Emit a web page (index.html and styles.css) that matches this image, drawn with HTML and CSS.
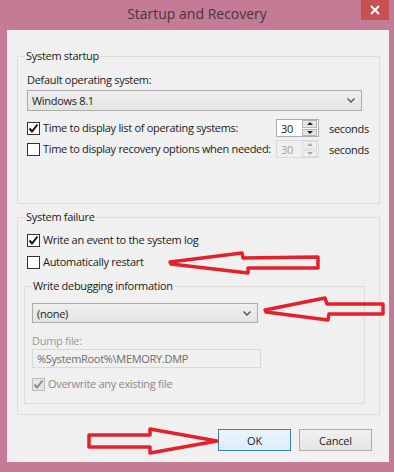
FILE: index.html
```html
<!DOCTYPE html>
<html lang="en">
<head>
    <meta charset="UTF-8">
    <title>Startup and Recovery</title>
    <link rel="stylesheet" href="styles.css">
</head>
<body>
<div class="window">
    <div class="titlebar">
        <span></span>
        <div class="title">Startup and Recovery</div>
        <div class="close">
            <svg width="10" height="10" viewBox="0 0 10 10"><path d="M1 1 L9 9 M9 1 L1 9" stroke="#fff" stroke-width="2"/></svg>
        </div>
    </div>

    <div class="client">
        <fieldset class="group startup">
            <legend>System startup</legend>
            <div class="label">Default operating system:</div>
            <div class="select os">
                <span>Windows 8.1</span>
                <svg class="chev" width="8" height="5" viewBox="0 0 8 5"><path d="M0.5 0.5 L4 4 L7.5 0.5" fill="none" stroke="#555" stroke-width="1.4"/></svg>
            </div>

            <div class="timerow first">
                <div class="check-line time-label">
                    <span class="box"><svg width="11" height="11" viewBox="0 0 11 11"><path d="M1.5 5.5 L4 8.5 L9.5 1.5" fill="none" stroke="#111" stroke-width="2"/></svg></span>
                    <span>Time to display list of operating systems:</span>
                </div>
                <div class="spin">
                    <span class="spin-val">30</span>
                    <div class="spin-btns">
                        <span class="up"></span>
                        <span class="down"></span>
                    </div>
                </div>
                <span class="unit">seconds</span>
            </div>

            <div class="timerow second">
                <div class="check-line time-label">
                    <span class="box"></span>
                    <span>Time to display recovery options when needed:</span>
                </div>
                <div class="spin disabled">
                    <span class="spin-val">30</span>
                    <div class="spin-btns">
                        <span class="up"></span>
                        <span class="down"></span>
                    </div>
                </div>
                <span class="unit">seconds</span>
            </div>
        </fieldset>

        <fieldset class="group failure">
            <legend>System failure</legend>
            <div class="check-line event">
                <span class="box"><svg width="11" height="11" viewBox="0 0 11 11"><path d="M1.5 5.5 L4 8.5 L9.5 1.5" fill="none" stroke="#111" stroke-width="2"/></svg></span>
                <span>Write an event to the system log</span>
            </div>
            <div class="check-line restart">
                <span class="box"></span>
                <span>Automatically restart</span>
            </div>

            <fieldset class="group debug">
                <legend>Write debugging information</legend>
                <div class="select dump-type">
                    <span>(none)</span>
                    <svg class="chev" width="8" height="5" viewBox="0 0 8 5"><path d="M0.5 0.5 L4 4 L7.5 0.5" fill="none" stroke="#555" stroke-width="1.4"/></svg>
                </div>
                <div class="label dim">Dump file:</div>
                <div class="textbox">%SystemRoot%\MEMORY.DMP</div>
                <div class="check-line overwrite dim">
                    <span class="box off"><svg width="11" height="11" viewBox="0 0 11 11"><path d="M1.5 5.5 L4 8.5 L9.5 1.5" fill="none" stroke="#8c8c8c" stroke-width="2"/></svg></span>
                    <span>Overwrite any existing file</span>
                </div>
            </fieldset>
        </fieldset>

        <div class="buttons">
            <button class="btn default">OK</button>
            <button class="btn">Cancel</button>
        </div>
    </div>

    <!-- hand drawn red arrows -->
    <svg class="marks" width="394" height="472" viewBox="0 0 394 472">
        <g fill="none" stroke="#e3202b" stroke-width="3.5" stroke-linejoin="round" stroke-linecap="round">
            <path d="M170 262 L242 253 L243 258 L318 257 L318 268 L248 268 L248 273 L171 264 Z"/>
            <path d="M265 310 L325 298 L327 304 L383 304 L383 314 L329 314 L328 320 L266 312 Z"/>
            <path d="M89 435 L150 435 L150 429 L217 441 L150 453 L150 447 L89 447 Z"/>
        </g>
    </svg>
</div>
</body>
</html>
```

FILE: styles.css
```css
* {
    box-sizing: border-box;
}

body {
    margin: 0;
    background: #c47b95;
    font-family: 'Open Sans', 'Noto Sans', sans-serif;
    font-size: 11px;
    letter-spacing: -0.3px;
    color: #1b1b1b;
}

.window {
    position: relative;
    width: 394px;
    height: 472px;
}

.titlebar {
    height: 30px;
    display: grid;
    grid-template-columns: 1fr auto 1fr;
}

.title {
    font-size: 14px;
    letter-spacing: 0;
    line-height: 28px;
    color: #4d3242;
}

.close {
    justify-self: end;
    margin-right: 5px;
    width: 28px;
    height: 20px;
    background: #c75050;
    display: flex;
    align-items: center;
    justify-content: center;
}

.client {
    margin: 0 5px 0 7px;
    height: 432px;
    background: #f0f0f0;
    padding: 0 9px 0 10px;
    overflow: hidden;
}

.group {
    margin: 0;
    border: 1px solid #dcdcdc;
    padding: 0 8px 0 9px;
    min-width: 0;
}

.group legend {
    padding: 0 1px;
    margin-left: -2px;
    line-height: 16px;
}

.startup {
    margin-top: 18px;
    padding-bottom: 45px;
}

.failure {
    margin-top: 5px;
    padding-bottom: 10px;
}

.debug {
    margin: 8px 0 0 -3px;
    width: 341px;
    padding: 0 7px 11px 7px;
}

.debug legend {
    margin-left: 0;
}

.label {
    line-height: 16px;
}

.startup .label {
    margin-top: 8px;
}

.dim {
    color: #9a9a9a;
}

.select {
    display: flex;
    align-items: center;
    justify-content: space-between;
    border: 1px solid #acacac;
    background: linear-gradient(#efefef, #e4e4e4);
    padding: 0 4px 0 4px;
}

.select.os {
    margin-top: 2px;
    width: 335px;
    height: 21px;
}

.select.dump-type {
    margin-top: 9px;
    width: 226px;
    height: 20px;
}

.chev {
    margin-right: 2px;
}

.check-line {
    display: flex;
    align-items: center;
    height: 16px;
    line-height: 16px;
    white-space: nowrap;
}

.box {
    width: 13px;
    height: 13px;
    border: 1px solid #333;
    background: #fff;
    margin-right: 3px;
    display: flex;
    align-items: center;
    justify-content: center;
    flex: none;
}

.box.off {
    border-color: #bcbcbc;
    background: #e6e6e6;
}

.timerow {
    display: flex;
    align-items: center;
    height: 18px;
}

.timerow.first {
    margin-top: 8px;
}

.timerow.second {
    margin-top: 3px;
}

.time-label {
    width: 249px;
    flex: none;
}

.spin {
    width: 43px;
    height: 18px;
    border: 1px solid #abadb3;
    background: #fff;
    display: flex;
    align-items: center;
    justify-content: space-between;
    padding-left: 4px;
    flex: none;
}

.spin-btns {
    width: 15px;
    height: 16px;
    margin-right: 1px;
    display: flex;
    flex-direction: column;
    gap: 1px;
}

.spin-btns span {
    flex: 1;
    background: #e6e6e6;
    border: 1px solid #b5b5b5;
    display: flex;
    align-items: center;
    justify-content: center;
}

.spin-btns .up::after {
    content: "";
    border-left: 3px solid transparent;
    border-right: 3px solid transparent;
    border-bottom: 3px solid #222;
}

.spin-btns .down::after {
    content: "";
    border-left: 3px solid transparent;
    border-right: 3px solid transparent;
    border-top: 3px solid #222;
}

.spin.disabled {
    border-color: #d9d9d9;
    background: #f0f0f0;
    color: #a5a5a5;
}

.spin.disabled .spin-btns span {
    background: #f0f0f0;
    border-color: #dadada;
}

.spin.disabled .up::after {
    border-bottom-color: #a8a8a8;
}

.spin.disabled .down::after {
    border-top-color: #a8a8a8;
}

.unit {
    margin-left: 10px;
}

.check-line.event {
    margin-top: 7px;
}

.check-line.restart {
    margin-top: 6px;
}

.debug .label {
    margin-top: 10px;
}

.textbox {
    width: 229px;
    height: 19px;
    border: 1px solid #d9d9d9;
    background: #f0f0f0;
    color: #6d6d6d;
    line-height: 17px;
    padding-left: 4px;
}

.check-line.overwrite {
    margin-top: 8px;
    color: #8a8a8a;
}

.buttons {
    margin-top: 14px;
    display: flex;
    justify-content: flex-end;
    gap: 8px;
    padding-right: 8px;
}

.btn {
    width: 73px;
    height: 22px;
    font-family: inherit;
    font-size: 11px;
    letter-spacing: -0.2px;
    color: #1b1b1b;
    border: 1px solid #acacac;
    background: linear-gradient(#f0f0f0, #e5e5e5);
    padding: 0;
}

.btn.default {
    border-color: #3c7fb1;
    background: linear-gradient(#ecf4fc, #dcecfc);
}

.marks {
    position: absolute;
    top: 0;
    left: 0;
    pointer-events: none;
}
```
